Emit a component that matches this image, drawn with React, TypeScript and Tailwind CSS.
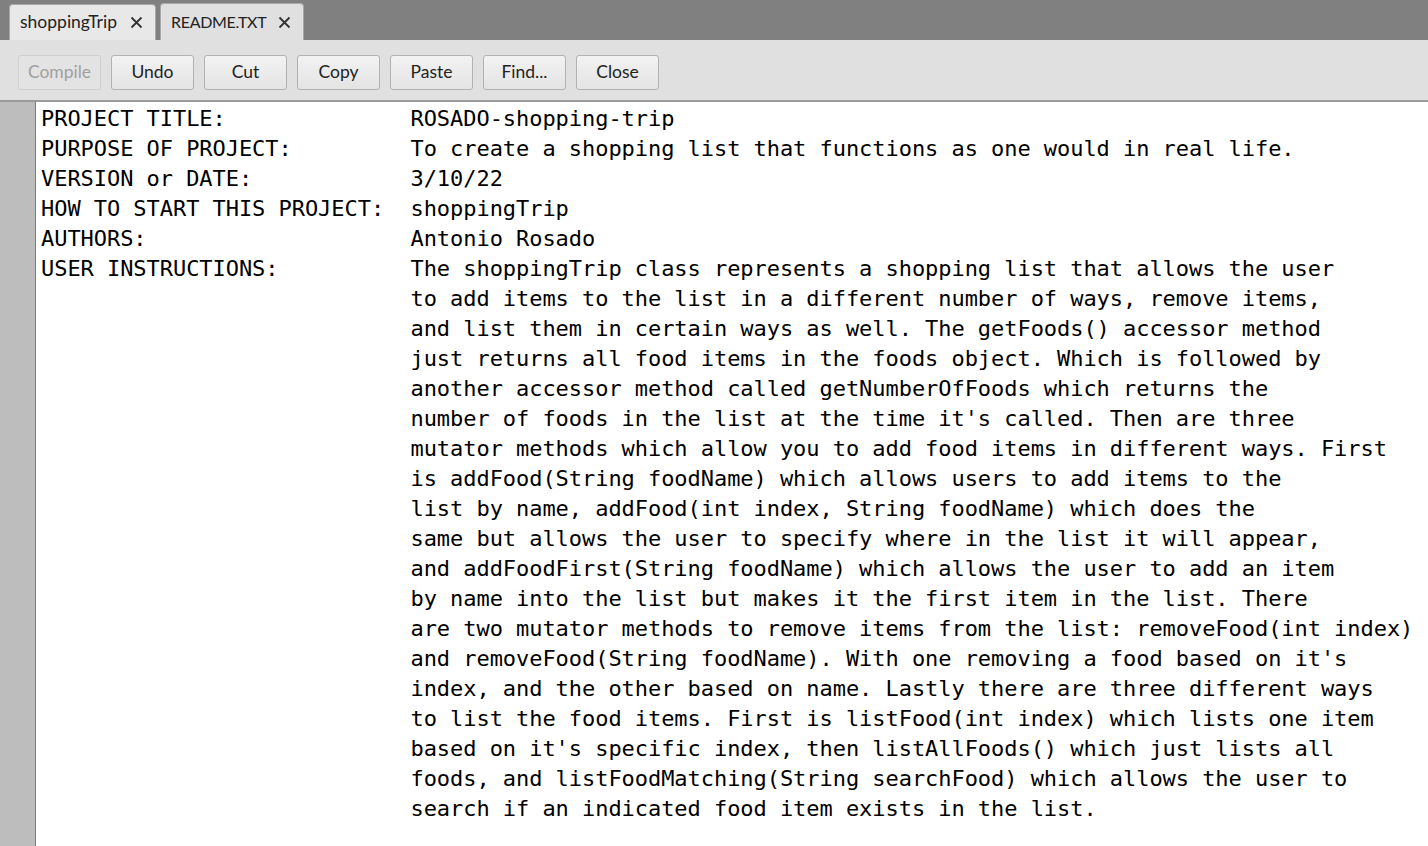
import React from "react";

const TABS = [
  { label: "shoppingTrip", active: false, width: "w-[147px]", text: "text-[17.5px]" },
  { label: "README.TXT", active: true, width: "w-[144px]", text: "text-[16px] tracking-[-0.3px]" },
];

const BUTTONS = ["Compile", "Undo", "Cut", "Copy", "Paste", "Find...", "Close"];

const HEADER: [string, string][] = [
  ["PROJECT TITLE:", "ROSADO-shopping-trip"],
  ["PURPOSE OF PROJECT:", "To create a shopping list that functions as one would in real life."],
  ["VERSION or DATE:", "3/10/22"],
  ["HOW TO START THIS PROJECT:", "shoppingTrip"],
  ["AUTHORS:", "Antonio Rosado"],
  ["USER INSTRUCTIONS:", "The shoppingTrip class represents a shopping list that allows the user"],
];

const MORE = [
  "to add items to the list in a different number of ways, remove items,",
  "and list them in certain ways as well. The getFoods() accessor method",
  "just returns all food items in the foods object. Which is followed by",
  "another accessor method called getNumberOfFoods which returns the",
  "number of foods in the list at the time it's called. Then are three",
  "mutator methods which allow you to add food items in different ways. First",
  "is addFood(String foodName) which allows users to add items to the",
  "list by name, addFood(int index, String foodName) which does the",
  "same but allows the user to specify where in the list it will appear,",
  "and addFoodFirst(String foodName) which allows the user to add an item",
  "by name into the list but makes it the first item in the list. There",
  "are two mutator methods to remove items from the list: removeFood(int index)",
  "and removeFood(String foodName). With one removing a food based on it's",
  "index, and the other based on name. Lastly there are three different ways",
  "to list the food items. First is listFood(int index) which lists one item",
  "based on it's specific index, then listAllFoods() which just lists all",
  "foods, and listFoodMatching(String searchFood) which allows the user to",
  "search if an indicated food item exists in the list.",
];

function CloseX() {
  return (
    <svg width="13" height="13" viewBox="0 0 13 13" className="shrink-0">
      <path d="M1.5 1.5 L11.5 11.5 M11.5 1.5 L1.5 11.5" stroke="#333" strokeWidth="1.8" />
    </svg>
  );
}

export default function App() {
  const lines = [
    ...HEADER.map(([k, v]) => k.padEnd(28, " ") + v),
    ...MORE.map((l) => " ".repeat(28) + l),
  ];

  return (
    <div className="flex h-[846px] w-[1428px] flex-col overflow-hidden bg-white font-['Lato',sans-serif]">
      {/* Tab strip */}
      <div className="flex h-[40px] items-end gap-[4px] bg-[#808080] pl-[9px]">
        {TABS.map((t) => (
          <div
            key={t.label}
            className={`flex shrink-0 items-center justify-between whitespace-nowrap rounded-t-[4px] border border-b-0 border-[#a8a8a8] pl-[10px] pr-[12px] text-[#222] ${t.width} ${
              t.active ? "h-[37px] bg-[#e0e0e0]" : "h-[36px] bg-[#e8e8e8]"
            }`}
          >
            <span className={t.text}>{t.label}</span>
            <CloseX />
          </div>
        ))}
      </div>

      {/* Toolbar */}
      <div className="flex h-[62px] items-center gap-[10px] border-b-2 border-[#9a9a9a] bg-[#e0e0e0] pl-[18px] pt-[4px]">
        {BUTTONS.map((b) => {
          const disabled = b === "Compile";
          return (
            <div
              key={b}
              className={`flex h-[35px] w-[83px] items-center justify-center rounded-[3px] border text-[17.5px] ${
                disabled
                  ? "border-[#cfcfcf] bg-[#e3e3e3] text-[#a0a0a0]"
                  : "border-[#b2b2b2] bg-gradient-to-b from-[#f2f2f2] to-[#e4e4e4] text-[#222]"
              }`}
            >
              {b}
            </div>
          );
        })}
      </div>

      {/* Editor */}
      <div className="flex flex-1">
        <div className="w-[36px] shrink-0 border-r border-[#7a7a7a] bg-[#bdbdbd]" />
        <pre className="m-0 flex-1 pl-[5px] pt-[2px] font-['DejaVu_Sans_Mono','Liberation_Mono',monospace] text-[22px] leading-[30px] tracking-[-0.05px] text-black">
          {lines.join("\n")}
        </pre>
      </div>
    </div>
  );
}
